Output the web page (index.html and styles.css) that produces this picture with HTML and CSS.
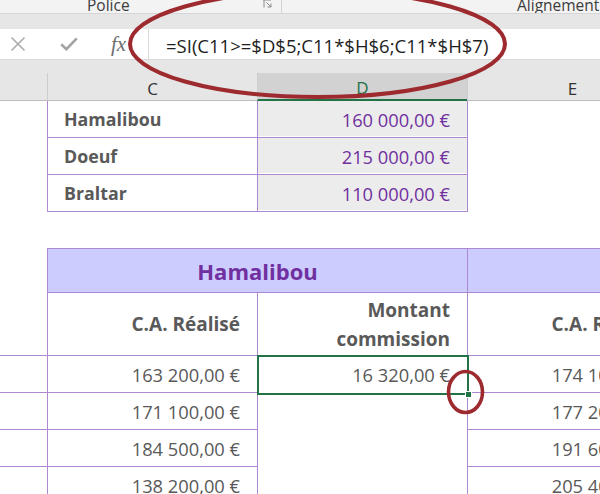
FILE: index.html
```html
<!DOCTYPE html>
<html lang="fr">
<head>
<meta charset="utf-8">
<title>Excel</title>
<link rel="stylesheet" href="styles.css">
</head>
<body>
<div class="page">
  <div class="ribbon">
    <div class="grp grp-police">
      <span class="glabel lab-police">Police</span>
      <svg class="launcher" width="10" height="10" viewBox="0 0 10 10">
        <path d="M1 0.5 V1 H0.5 M1 1 V8.5 M1 1 H8" fill="none" stroke="#8a8a8a" stroke-width="1"/>
        <path d="M3.5 3.5 L8 8 M8 4.5 V8 H4.5" fill="none" stroke="#8a8a8a" stroke-width="1"/>
      </svg>
    </div>
    <div class="grp grp-align">
      <span class="glabel lab-align">Alignement</span>
    </div>
  </div>
  <div class="band1"></div>
  <div class="fbar">
    <div class="fbtns">
      <svg class="ico-x" width="16" height="16" viewBox="0 0 16 16">
        <path d="M1.5 1.5 L14.5 14.5 M14.5 1.5 L1.5 14.5" stroke="#ababab" stroke-width="1.6" fill="none"/>
      </svg>
      <svg class="ico-ok" width="18" height="14" viewBox="0 0 18 14">
        <path d="M1.2 7.2 L6.4 12.2 L16.8 1.4" stroke="#a3a3a3" stroke-width="2.6" fill="none" stroke-linejoin="miter"/>
      </svg>
      <span class="fx">fx</span>
    </div>
    <div class="finput">=SI(C11&gt;=$D$5;C11*$H$6;C11*$H$7)</div>
  </div>
  <div class="band2"></div>
  <div class="colheads">
    <div class="ch cha"></div>
    <div class="ch">C</div>
    <div class="ch chd">D</div>
    <div class="ch">E</div>
  </div>
  <div class="sheet">
    <!-- row 5 -->
    <div class="c"></div>
    <div class="c bl bb name">Hamalibou</div>
    <div class="c bl bb gray num purple">160 000,00 €</div>
    <div class="c bl"></div>
    <!-- row 6 -->
    <div class="c"></div>
    <div class="c bl bb name">Doeuf</div>
    <div class="c bl bb gray num purple">215 000,00 €</div>
    <div class="c bl"></div>
    <!-- row 7 -->
    <div class="c"></div>
    <div class="c bl bb name">Braltar</div>
    <div class="c bl bb gray num purple">110 000,00 €</div>
    <div class="c bl"></div>
    <!-- row 8 -->
    <div class="c"></div>
    <div class="c bb"></div>
    <div class="c bb"></div>
    <div class="c bb"></div>
    <!-- row 9 -->
    <div class="c"></div>
    <div class="c bl bb hdr span2">Hamalibou</div>
    <div class="c bl bb hdr"></div>
    <!-- row 10 -->
    <div class="c bb"></div>
    <div class="c bl bb num bold">C.A. Réalisé</div>
    <div class="c bl bb num bold twol">Montant<br>commission</div>
    <div class="c bl bb num bold">C.A. Réalisé</div>
    <!-- row 11 -->
    <div class="c bb"></div>
    <div class="c bl bb num">163 200,00 €</div>
    <div class="c bl num selcell">16 320,00 €<span class="sel"></span><span class="handle"></span></div>
    <div class="c bl bb num">174 100,00 €</div>
    <!-- row 12 -->
    <div class="c bb"></div>
    <div class="c bl bb num">171 100,00 €</div>
    <div class="c bl num"></div>
    <div class="c bl bb num">177 200,00 €</div>
    <!-- row 13 -->
    <div class="c bb"></div>
    <div class="c bl bb num">184 500,00 €</div>
    <div class="c bl num"></div>
    <div class="c bl bb num">191 600,00 €</div>
    <!-- row 14 -->
    <div class="c bb"></div>
    <div class="c bl bb num">138 200,00 €</div>
    <div class="c bl num"></div>
    <div class="c bl bb num">205 400,00 €</div>
  </div>
  <svg class="annot" width="600" height="494" viewBox="0 0 600 494">
    <ellipse cx="317.5" cy="44" rx="187.5" ry="53" fill="none" stroke="#9d2a2e" stroke-width="4"/>
    <ellipse cx="465.5" cy="392" rx="17" ry="20.5" fill="none" stroke="#9d2a2e" stroke-width="3.6"/>
  </svg>
</div>
</body>
</html>
```

FILE: styles.css
```css
* { box-sizing: border-box; }
html, body { margin: 0; padding: 0; background: #fff; }
body { font-family: "Open Sans", "Noto Sans", sans-serif; }

.page {
  position: relative;
  width: 600px;
  height: 494px;
  overflow: hidden;
  background: #fff;
}

/* ribbon */
.ribbon {
  height: 14px;
  background: #f3f3f3;
  border-bottom: 1px solid #d6d6d6;
  display: flex;
  overflow: hidden;
}
.grp {
  display: flex;
  align-items: flex-start;
  height: 13px;
}
.grp-police {
  width: 282px;
  border-right: 1px solid #d4d4d4;
}
.grp-align { flex: 1; }
.glabel {
  font-size: 15.5px;
  line-height: 16px;
  margin-top: -3px;
  color: #3c3c3c;
  white-space: nowrap;
}
.lab-police { margin-left: 87px; }
.lab-align { margin-left: 235px; }
.launcher {
  margin-left: auto;
  margin-right: 8px;
  margin-top: -1px;
}

.band1 {
  height: 15px;
  background: #e6e6e6;
}

/* formula bar */
.fbar {
  height: 31px;
  display: flex;
  background: #fff;
  border-bottom: 1px solid #d9d9d9;
}
.fbtns {
  width: 148px;
  display: flex;
  align-items: center;
}
.ico-x { margin-left: 10px; }
.ico-ok { margin-left: 34px; }
.fx {
  margin-left: 33px;
  font-family: "Liberation Serif", "DejaVu Serif", serif;
  font-style: italic;
  font-size: 21px;
  color: #6e6e6e;
  line-height: 1;
}
.finput {
  flex: 1;
  border-left: 1px solid #dcdcdc;
  padding-left: 17px;
  padding-top: 3px;
  display: flex;
  align-items: center;
  font-size: 18.5px;
  color: #1e1e1e;
  white-space: nowrap;
}

.band2 {
  height: 13px;
  background: #e6e6e6;
}

/* column headers */
.colheads {
  height: 28px;
  display: grid;
  grid-template-columns: 47px 210px 210px 210px;
  background: #e6e6e6;
}
.ch {
  border-left: 1px solid #cdcdcd;
  border-bottom: 1px solid #bdbdbd;
  display: flex;
  align-items: center;
  justify-content: center;
  padding-top: 3px;
  font-size: 17px;
  color: #333;
}
.cha { border-left: none; }
.chd {
  background: #d2d2d2;
  color: #217346;
  border-bottom: 2px solid #217346;
}

/* sheet */
.sheet {
  display: grid;
  grid-template-columns: 47px 210px 210px 210px;
  grid-template-rows: 37px 37px 37px 37px 44px 63px 37px 37px 37px 37px;
}
.c {
  display: flex;
  align-items: center;
  font-size: 18.3px;
  color: #595959;
  white-space: nowrap;
}
.bl { border-left: 1px solid #ad88d3; }
.bb { border-bottom: 1px solid #ad88d3; }
.num { justify-content: flex-end; padding-right: 17px; text-align: right; }
.name { font-weight: 700; padding-left: 16px; font-size: 17.8px; }
.bold { font-weight: 700; font-size: 19px; }
.purple { color: #7030a0; }
.gray {
  background: #ececec;
  box-shadow: inset 0 -1px 0 #fff;
}
.hdr {
  background: #ccccff;
  justify-content: center;
  font-size: 22px;
  font-weight: 700;
  color: #7030a0;
}
.span2 { grid-column: span 2; }
.twol {
  line-height: 29px;
  padding-top: 1px;
}

.selcell { position: relative; }
.sel {
  position: absolute;
  left: -1px;
  top: -1px;
  right: -2px;
  bottom: -2px;
  border: 2px solid #217346;
}
.handle {
  position: absolute;
  right: -5px;
  bottom: -5px;
  width: 7px;
  height: 7px;
  background: #217346;
  border: 1px solid #fff;
}

.annot {
  position: absolute;
  left: 0;
  top: 0;
  pointer-events: none;
}
```
